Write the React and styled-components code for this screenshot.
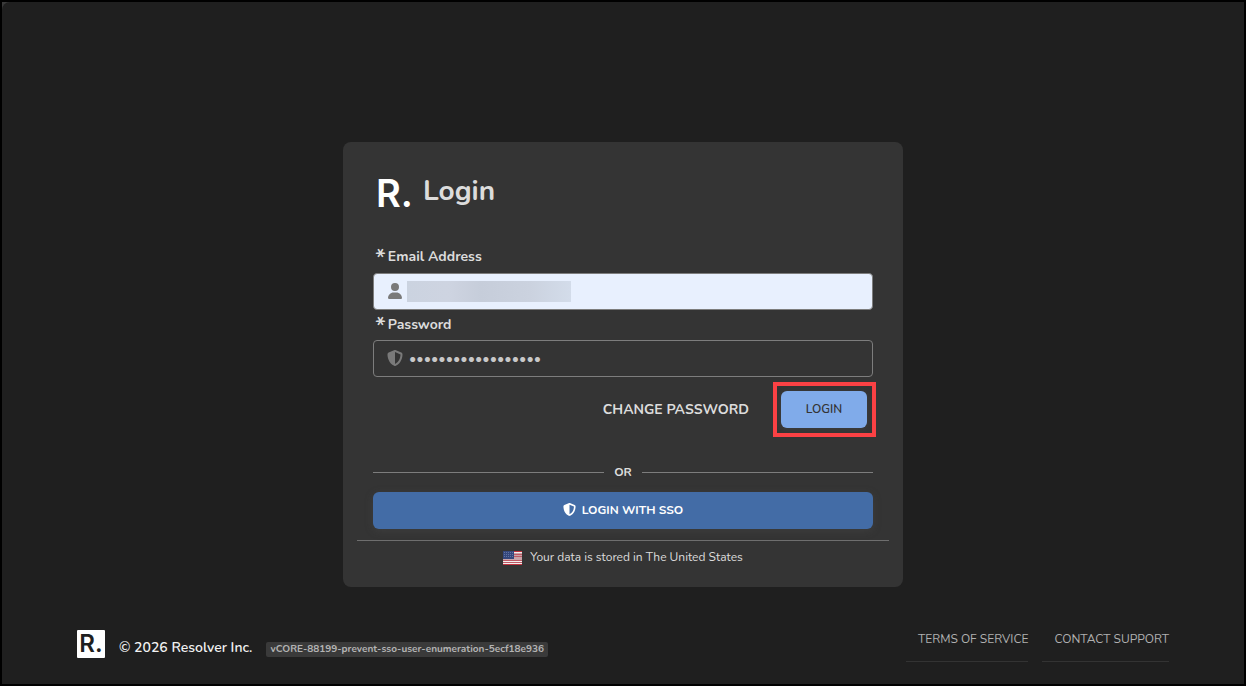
import React, { useState } from "react";
import styled, { createGlobalStyle, css } from "styled-components";
import { FaUser, FaShieldHalved } from "react-icons/fa6";

const GlobalStyle = createGlobalStyle`
  *, *::before, *::after { box-sizing: border-box; }
  body {
    margin: 0;
    background: #1f1f1f;
    color: #dcdcdc;
    font-family: Nunito, Lato, "Liberation Sans", sans-serif;
    font-size: 14px;
    line-height: 20px;
  }
  button, input { font: inherit; }
`;

const Frame = styled.div`
  min-height: 100vh;
  display: flex;
  border: 2px solid #000;
  background: #3a3a3a;
`;

const Page = styled.div`
  flex: 1;
  display: flex;
  flex-direction: column;
  justify-content: space-between;
  gap: 40px;
  padding: 140px 75px 22px;
  border-top-left-radius: 8px;
  background: #1f1f1f;
`;

const Card = styled.main`
  width: 100%;
  max-width: 560px;
  margin: 0 auto;
  padding: 30px 14px 0;
  border-radius: 8px;
  background: #343434;
`;

const Form = styled.form`
  padding: 0 16px 11px;
`;

const Heading = styled.header`
  display: flex;
  align-items: center;
  gap: 10px;
  height: 42px;
  margin-bottom: 28px;
  padding-left: 3px;
`;

const Title = styled.h1`
  margin: 0;
  padding-bottom: 4px;
  font-size: 28px;
  line-height: 36px;
  font-weight: 700;
`;

const LogoMark = styled.span`
  font-family: Inter, sans-serif;
  font-weight: 600;
  ${(p) =>
    p.$boxed
      ? css`
          width: 28px;
          height: 28px;
          border-radius: 1px;
          background: #fff;
          color: #1f1f1f;
          font-size: 24px;
          line-height: 28px;
          text-align: center;
        `
      : css`
          color: #fff;
          font-size: 38px;
          line-height: 40px;
        `}
`;

const Label = styled.label`
  display: flex;
  align-items: center;
  gap: 2px;
  height: 30px;
  padding-left: 2px;
  font-weight: 700;
`;

const Star = styled.span`
  font-size: 24px;
  line-height: 30px;
  font-weight: 600;
  padding-top: 2px;
`;

const Field = styled.div`
  display: flex;
  align-items: center;
  gap: 4px;
  height: 37px;
  margin-top: ${(p) => (p.$filled ? "1px" : "0")};
  padding: 0 13px;
  border: 1px solid #7d7d7d;
  border-radius: 4px;
  background: ${(p) => (p.$filled ? "#e8f0fe" : "transparent")};
  color: #7a7a7a;
  svg { margin-bottom: 2px; }
`;

const Input = styled.input`
  flex: 1;
  min-width: 0;
  height: 35px;
  padding: 0 2px;
  border: 0;
  outline: 0;
  background: transparent;
  color: ${(p) => p.$color};
`;

const Redaction = styled.span`
  width: 164px;
  height: 21px;
  background: linear-gradient(90deg, #cbd3e0, #ced4e1 25%, #c6cdda 45%, #cbd2df 75%, #d3dcea);
`;

const Actions = styled.div`
  display: flex;
  justify-content: flex-end;
  align-items: center;
  gap: 32px;
  padding: 14px 6px 34px 0;
`;

const TextLink = styled.a`
  color: #dcdcdc;
  font-weight: 700;
  text-decoration: none;
`;

const Highlight = styled.div`
  position: relative;
  &::after {
    content: "";
    position: absolute;
    inset: -9px -9px -9px -8px;
    border: 4px solid #fb4144;
    pointer-events: none;
  }
`;

const Button = styled.button`
  display: flex;
  align-items: center;
  justify-content: center;
  gap: 6px;
  width: ${(p) => (p.$primary ? "100%" : "86px")};
  height: 37px;
  padding: 0 0 2px;
  border: 0;
  border-radius: 6px;
  background: ${(p) => (p.$primary ? "#436ca6" : "#80abea")};
  color: ${(p) => (p.$primary ? "#fff" : "#343434")};
  font-size: 12px;
  font-weight: ${(p) => (p.$primary ? 700 : 600)};
  box-shadow: 0 2px 8px rgba(90, 90, 90, 0.25);
`;

const Divider = styled.div`
  display: flex;
  align-items: center;
  gap: 10px;
  margin-bottom: 10px;
  font-size: 12px;
  font-weight: 700;
  &::before, &::after {
    content: "";
    flex: 1;
    border-top: 1px solid #7d7d7d;
  }
`;

const Region = styled.p`
  display: flex;
  justify-content: center;
  align-items: center;
  gap: 8px;
  margin: 0;
  padding: 6px 0 20px;
  border-top: 1px solid #6e6e6e;
  font-size: 12px;
  svg { margin-top: 2px; }
`;

const Footer = styled.footer`
  display: flex;
  justify-content: space-between;
  align-items: flex-start;
`;

const Legal = styled.div`
  display: flex;
  align-items: center;
  gap: 14px;
  color: #f2f2f2;
  font-weight: 600;
`;

const Copyright = styled.span`
  padding-top: 8px;
`;

const Version = styled.span`
  margin-top: 10px;
  padding: 0 4px;
  border-radius: 2px;
  background: #3a3a3a;
  color: #b4b4b4;
  font-size: 10px;
  line-height: 15px;
  font-weight: 700;
`;

const FooterNav = styled.nav`
  display: flex;
  gap: 14px;
`;

const FooterLink = styled.a`
  height: 32px;
  padding-left: 12px;
  border-bottom: 1px solid #333;
  color: #b0b0b0;
  font-size: 12px;
  line-height: 18px;
  text-decoration: none;
`;

function Flag() {
  return (
    <svg width="19" height="14" viewBox="0 0 19 14" aria-hidden="true">
      <rect width="19" height="14" fill="#c9a3a8" />
      <path d="M0 .5h19M0 13.5h19" stroke="#c2323f" />
      <path d="M11 1.5h8M0 10.5h19M0 12.5h19" stroke="#f3eeee" />
      <path d="M11 3.5h8M11 5.5h8M0 9.5h19M0 11.5h19" stroke="#bd5a66" />
      <rect width="11" height="8" fill="#34477c" />
      <path d="M1 1.5h10M1 3.5h10M1 5.5h10" stroke="#6273a0" strokeDasharray="1 1" />
    </svg>
  );
}

export default function App() {
  const [email, setEmail] = useState("");
  const [password, setPassword] = useState("passwordpassword12");

  return (
    <>
      <GlobalStyle />
      <Frame>
        <Page>
          <Card>
            <Form onSubmit={(e) => e.preventDefault()}>
              <Heading>
                <LogoMark>R.</LogoMark>
                <Title>Login</Title>
              </Heading>
              <Label htmlFor="email">
                <Star>*</Star>Email Address
              </Label>
              <Field $filled>
                <FaUser size={16} />
                <Redaction />
                <Input id="email" type="email" $color="#222" value={email} onChange={(e) => setEmail(e.target.value)} />
              </Field>
              <Label htmlFor="password">
                <Star>*</Star>Password
              </Label>
              <Field>
                <FaShieldHalved size={16} />
                <Input id="password" type="password" $color="#c8c8c8" value={password} onChange={(e) => setPassword(e.target.value)} />
              </Field>
              <Actions>
                <TextLink href="#change-password">CHANGE PASSWORD</TextLink>
                <Highlight>
                  <Button type="submit">LOGIN</Button>
                </Highlight>
              </Actions>
              <Divider>OR</Divider>
              <Button type="button" $primary>
                <FaShieldHalved size={13} />
                LOGIN WITH SSO
              </Button>
            </Form>
            <Region>
              <Flag />
              Your data is stored in The United States
            </Region>
          </Card>
          <Footer>
            <Legal>
              <LogoMark $boxed>R.</LogoMark>
              <Copyright>© 2026 Resolver Inc.</Copyright>
              <Version>vCORE-88199-prevent-sso-user-enumeration-5ecf18e936</Version>
            </Legal>
            <FooterNav>
              <FooterLink href="#terms">TERMS OF SERVICE</FooterLink>
              <FooterLink href="#support">CONTACT SUPPORT</FooterLink>
            </FooterNav>
          </Footer>
        </Page>
      </Frame>
    </>
  );
}
